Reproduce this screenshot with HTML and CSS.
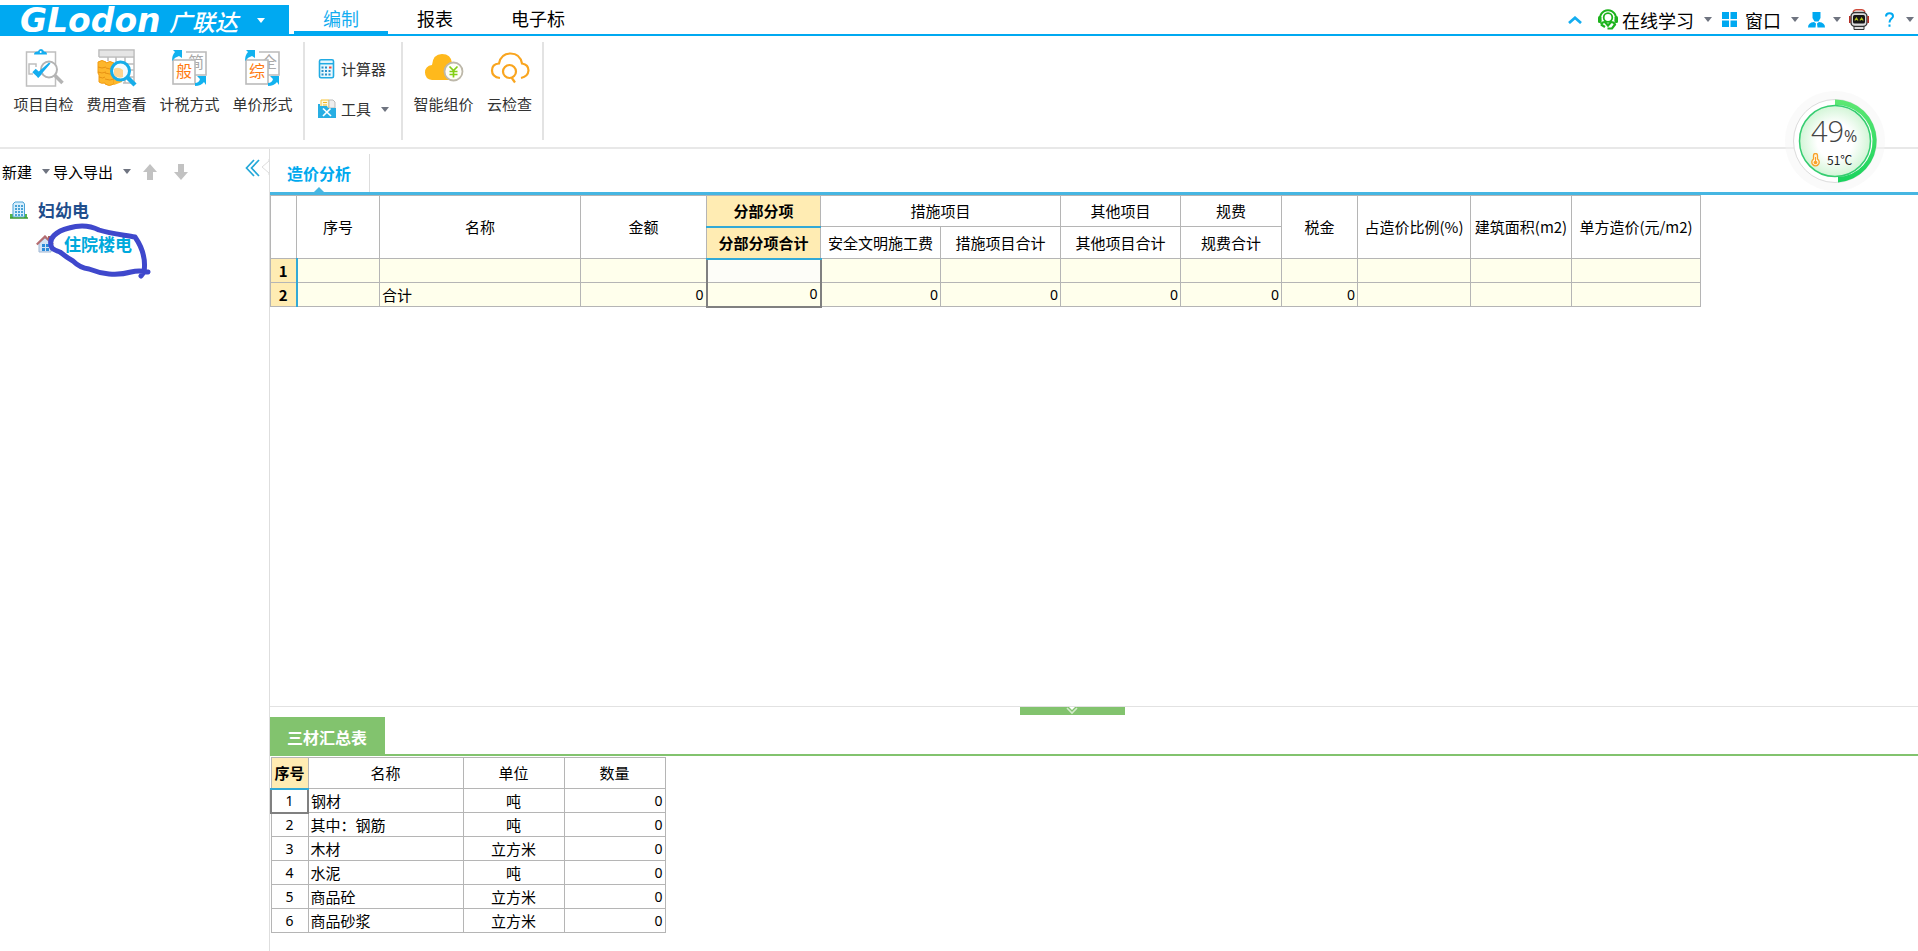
FILE: index.html
```html
<!DOCTYPE html>
<html lang="zh-CN">
<head>
<meta charset="utf-8">
<title>广联达 造价分析</title>
<link rel="stylesheet" href="styles.css">
</head>
<body>
<header class="topbar">
  <button class="brand"><span class="brand-en">GLodon</span><span class="brand-cn">广联达</span><i class="caret caret-white"></i></button>
  <nav class="menu">
    <button class="menu-tab active">编制</button>
    <button class="menu-tab">报表</button>
    <button class="menu-tab">电子标</button>
  </nav>
  <div class="top-tools">
    <button aria-label="收起"><svg width="14" height="8" viewBox="0 0 14 8"><path d="M1 7 7 1.8 13 7" fill="none" stroke="#14adf0" stroke-width="2.8"/></svg></button>
    <button class="study"><svg width="20" height="21" viewBox="0 0 20 21"><path d="M2.500 12A8 8 0 1 1 17.500 12" fill="none" stroke="#1db31d" stroke-width="2"/><rect x="0" y="7" width="3.500" height="7" rx="1.500" fill="#1db31d"/><rect x="16.500" y="7" width="3.500" height="7" rx="1.500" fill="#1db31d"/><circle cx="10" cy="8.500" r="4.300" fill="#fff" stroke="#1db31d" stroke-width="1.800"/><path d="M3 15.500q1-2.500 4-2.500l3 3.500 3-3.500q3 0 4 2.500l-3 4H9.500M3 15.500l4 2.500" fill="none" stroke="#1db31d" stroke-width="2.200"/></svg>在线学习<i class="caret"></i></button>
    <button class="window"><svg width="15" height="15" viewBox="0 0 15 15"><path d="M0 0h7v7H0zM8.500 0h6.500v7H8.500zM0 8.500h7V15H0zM8.500 8.500H15V15H8.500z" fill="#00a9f1"/></svg>窗口<i class="caret"></i></button>
    <button class="user" aria-label="用户"><svg width="17" height="16" viewBox="0 0 17 16"><path d="M4.500 0h8v6l-2 3.500h-4l-2-3.500zM0 15.500q0-5 6-5.500l2 1.500L7.500 15.500h2L9 11.500 11 10q6 .5 6 5.500z" fill="#00a9f1"/></svg><i class="caret"></i></button>
    <button class="robot" aria-label="机器人"><svg width="20" height="21" viewBox="0 0 20 21"><path d="M4 3Q5 .8 7 .8h6Q15 .8 16 3" fill="#fff" stroke="#cf4b3c" stroke-width="1.400"/><rect x="2" y="3.500" width="16" height="14" rx="4" fill="#ddd" stroke="#333" stroke-width="1.400"/><path d="M.8 7v7M19.200 7v7" stroke="#b32e25" stroke-width="1.600"/><rect x="4" y="6" width="12" height="8.500" rx="1.500" fill="#161616"/><path d="M5.800 11.500l1.600-2.500 1.600 2.500M11 11.500l1.600-2.500 1.600 2.500" stroke="#b9c824" fill="none" stroke-width="1.200"/><path d="M5 17.500h10v3H5z" fill="#ddd" stroke="#333"/></svg></button>
    <button class="help" aria-label="帮助"><svg width="9" height="15" viewBox="0 0 9 15"><path d="M1 4.500Q1 1.200 4.500 1.200T8 4.200C8 6.600 4.500 6.800 4.500 10.500M4.500 12.500v2.300" fill="none" stroke="#00a9f1" stroke-width="2"/></svg><i class="caret"></i></button>
  </div>
</header>

<section class="ribbon">
  <div class="group">
    <button class="tool"><svg width="40" height="40" viewBox="0 0 40 40"><rect x="2.500" y="3" width="29" height="34" fill="#fff" stroke="#bfbfbf" stroke-width="1.500"/><path d="M10 5.500Q10 2.500 14 2.500Q14.500 0 17 0T20 2.500Q23 2.500 23 5.500z" fill="#14adf0"/><circle cx="16.700" cy="3" r="1" fill="#fff"/><path d="M9 25H5V15h7v3" fill="none" stroke="#bfbfbf" stroke-width="1.500"/><circle cx="25" cy="20.500" r="8" fill="#fff" stroke="#b4b4b4" stroke-width="2"/><path d="M10 21.500l6 5.500" fill="none" stroke="#14adf0" stroke-width="5"/><path d="M14 29l-2-4L25 13.500l1.500 1z" fill="#14adf0"/><path d="M31 26.500l7.500 7.500" stroke="#b4b4b4" stroke-width="3.500"/></svg>项目自检</button>
    <button class="tool"><svg width="40" height="40" viewBox="0 0 40 40"><path d="M2 8V1h35v33H26M2 8h35M19 8v20M28 8v26M11 8v4M11 15h26M22 21h15M24 28h13" fill="none" stroke="#bbb" stroke-width="1.500"/><rect x="3" y="2" width="33" height="5" fill="#e5e5e5"/><path d="M1 13q4-3 8 0v1q4-3 8 0v21q-5 3-9 0V34q-4 1-6-1v-7l-1-2z" fill="#fdb62b" stroke="#f29c12"/><path d="M1 18q4 2 8 0M1 23q4 2 8 0M2 28q4 2 6 0M9 19q4 2 8 0M8 24q5 2 9 0M8 30q5 2 9 0" fill="none" stroke="#e89214"/><path d="M17 28h8v5l-8 3z" fill="#fdb62b"/><circle cx="23.500" cy="22" r="9" fill="#f3fbff" stroke="#16ade9" stroke-width="3"/><path d="M17 20q4-3 9 1v7q-5 2-9-2z" fill="#fcd490"/><path d="M30 28l8 8" stroke="#16ade9" stroke-width="4.500"/></svg>费用查看</button>
    <button class="tool"><svg width="38" height="40" viewBox="0 0 38 40"><path d="M15 3h20v23H23" fill="#fff" stroke="#bbb" stroke-width="1.600"/><text x="17" y="19" class="glyph glyph-back">简</text><rect x="2" y="11" width="22" height="24" fill="#fff" stroke="#bbb" stroke-width="1.600"/><text x="5" y="28" class="glyph">般</text><path d="M1 12Q1 6 4 3L2 1h9v8L8 7Q4 8 1 12zM24 37q6 0 9-4l2 3V27h-9l3 3q-1 4-5 4z" fill="#12b2ef"/></svg>计税方式</button>
    <button class="tool"><svg width="38" height="40" viewBox="0 0 38 40"><path d="M15 3h20v23H23" fill="#fff" stroke="#bbb" stroke-width="1.600"/><text x="17" y="19" class="glyph glyph-back">全</text><rect x="2" y="11" width="22" height="24" fill="#fff" stroke="#bbb" stroke-width="1.600"/><text x="5" y="28" class="glyph">综</text><path d="M1 12Q1 6 4 3L2 1h9v8L8 7Q4 8 1 12zM24 37q6 0 9-4l2 3V27h-9l3 3q-1 4-5 4z" fill="#12b2ef"/></svg>单价形式</button>
  </div>
  <div class="group stacked">
    <button class="mini"><svg width="18" height="20" viewBox="0 0 18 20"><rect x="1.500" y=".8" width="14" height="18" rx="1.500" fill="#e9f7fd" stroke="#21abe3" stroke-width="1.600"/><path d="M2 4.700h13" stroke="#21abe3" stroke-width="1.500"/><path d="M3.500 8.500h7M3.500 12h10M3.500 15.500h10" stroke="#278fc9" stroke-width="1.800" stroke-dasharray="2 1.500"/><path d="M11 8.500h2.500" stroke="#f04a3c" stroke-width="2"/></svg>计算器</button>
    <button class="mini"><svg width="18" height="20" viewBox="0 0 18 20"><path d="M3 1h8v8H3z" fill="#fff8df" stroke="#f5c33a"/><path d="M5 3.500h4M5 6h4" stroke="#f5b722"/><path d="M11 1h4l2 2v6h-6z" fill="#eee" stroke="#bbb"/><path d="M0 5h2v2h7l1 2h8v10H0z" fill="#27aee3"/><path d="M5 9.500l8 7.500M12.500 9.500L5 17" stroke="#fff" stroke-width="1.700"/></svg>工具<i class="caret"></i></button>
  </div>
  <div class="group cloud">
    <button class="tool"><svg width="40" height="40" viewBox="0 0 40 40"><path d="M8 31Q1 30 1 23.500 1 17 8 16 9 5 18 5T28 14Q33 15 34 20V31z" fill="#ffb91c"/><circle cx="29.500" cy="22.500" r="9" fill="#fffef8" stroke="#bdb8aa" stroke-width="1.800"/><path d="M25.500 17.500l4 4 4-4M29.500 21.500v7M25.500 22.500h8M25.500 25.500h8" fill="none" stroke="#83cf16" stroke-width="1.700"/></svg>智能组价</button>
    <button class="tool narrow"><svg width="40" height="40" viewBox="0 0 40 40"><path d="M10 29Q2 28 2 21.500 2 15 9 14.500 11 4.500 20.500 4.500T32 14.500Q38.500 15.500 38.500 21.500 38 27.500 31 29" fill="none" stroke="#f9a51f" stroke-width="2.200"/><circle cx="19.500" cy="22.500" r="6.500" fill="none" stroke="#f9a51f" stroke-width="2.200"/><path d="M21.500 28.500l3.500 5" stroke="#f9a51f" stroke-width="2.200"/></svg>云检查</button>
  </div>
</section>

<main class="workspace">
  <aside class="sidebar">
    <div class="side-tools">
      <button>新建<i class="caret"></i></button>
      <button>导入导出<i class="caret"></i></button>
      <button class="up" aria-label="上移"><svg width="14" height="16" viewBox="0 0 14 16"><path d="M7 0l7 8h-4v8H4V8H0z" fill="#c2c2c2"/></svg></button>
      <button class="down" aria-label="下移"><svg width="14" height="16" viewBox="0 0 14 16"><path d="M7 16l7-8h-4V0H4v8H0z" fill="#c2c2c2"/></svg></button>
      <button class="fold" aria-label="折叠"><svg width="15" height="18" viewBox="0 0 15 18"><path d="M9 1L1.500 9 9 17M14 1L6.500 9 14 17" fill="none" stroke="#22a7d8" stroke-width="1.700"/></svg></button>
    </div>
    <ul class="tree">
      <li class="node root"><svg width="18" height="18" viewBox="0 0 18 18"><path d="M0 17v-4h3v4zM14 17v-4h3v4z" fill="#57b548"/><path d="M3 16V3l2-2h8l1.500 2v13z" fill="#d9effc" stroke="#4aa3d6"/><path d="M5 5h8M5 8h8M5 11h8M5 14h8" stroke="#4aa3d6" stroke-width="1.800" stroke-dasharray="2 1"/><path d="M0 17h18" stroke="#3d9b35" stroke-width="1.500"/></svg>妇幼电</li>
      <li class="node leaf"><svg width="18" height="18" viewBox="0 0 18 18"><path d="M3 8l6-5 6 5v9H3z" fill="#d3e3f5" stroke="#9eb6d3"/><path d="M12 1h2v4h-2z" fill="#a95c5c"/><path d="M.8 9.500L9 1.500l8 8" fill="none" stroke="#b56d70" stroke-width="2.200"/><path d="M6 9h3v3H6zM10 9h3v3h-3zM6 13h3v3H6zM10 13h3v3h-3z" fill="#2c8ad8"/></svg>住院楼电
        <svg class="scribble" width="106" height="56" viewBox="0 0 106 56"><path d="M101 49Q92 47 84 49 74 52 62 51 52 50 42 46 33 45 26 38 19 34 13 29 7 27 5 25C0 15 10 8 22 5 32 2 42 2 52 7 64 11 78 12 88 14 95 24 99 36 97 49L94 53" fill="none" stroke="#3f48cc" stroke-width="5" stroke-linecap="round" stroke-linejoin="round"/></svg>
      </li>
    </ul>
    <svg class="notch" width="10" height="16" viewBox="0 0 10 16"><path d="M9 0v2L2 8l7 6v2" fill="#fff" stroke="#ddd"/></svg>
  </aside>

  <div class="content">
    <section class="analysis">
      <div class="tabs"><button class="tab">造价分析</button></div>
      <table class="grid cost">
        <colgroup><col class="w26"><col class="w83"><col class="w201"><col class="w126"><col class="w114"><col class="w120"><col class="w120"><col class="w120"><col class="w101"><col class="w76"><col class="w113"><col class="w101"><col class="w129"></colgroup>
        <thead>
          <tr class="h31"><th rowspan="2"></th><th rowspan="2">序号</th><th rowspan="2">名称</th><th rowspan="2">金额</th><th class="hot">分部分项</th><th colspan="2">措施项目</th><th>其他项目</th><th>规费</th><th rowspan="2">税金</th><th rowspan="2">占造价比例(%)</th><th rowspan="2">建筑面积(m2)</th><th rowspan="2">单方造价(元/m2)</th></tr>
          <tr class="h32"><th class="hot">分部分项合计</th><th>安全文明施工费</th><th>措施项目合计</th><th>其他项目合计</th><th>规费合计</th></tr>
        </thead>
        <tbody>
          <tr><th class="rowno">1</th><td></td><td></td><td></td><td class="sel sel-top"></td><td></td><td></td><td></td><td></td><td></td><td></td><td></td><td></td></tr>
          <tr><th class="rowno">2</th><td></td><td>合计</td><td class="num">0</td><td class="num sel sel-end">0</td><td class="num">0</td><td class="num">0</td><td class="num">0</td><td class="num">0</td><td class="num">0</td><td></td><td></td><td></td></tr>
        </tbody>
      </table>
    </section>
    <section class="summary">
      <button class="handle" aria-label="收起面板"><svg width="12" height="8" viewBox="0 0 12 8"><path d="M3 0h6L6 3z" fill="#fff"/><path d="M1 1l5 5 5-5" fill="none" stroke="#d3ebcb" stroke-width="1.600"/></svg></button>
      <div class="green-tabs"><button class="green-tab">三材汇总表</button></div>
      <table class="grid materials">
        <colgroup><col class="w37"><col class="w155"><col class="w101"><col class="w101"></colgroup>
        <thead><tr class="h31"><th class="hot">序号</th><th>名称</th><th>单位</th><th>数量</th></tr></thead>
        <tbody>
          <tr><td class="mid picked">1</td><td>钢材</td><td class="mid">吨</td><td class="num">0</td></tr>
          <tr><td class="mid">2</td><td>其中：钢筋</td><td class="mid">吨</td><td class="num">0</td></tr>
          <tr><td class="mid">3</td><td>木材</td><td class="mid">立方米</td><td class="num">0</td></tr>
          <tr><td class="mid">4</td><td>水泥</td><td class="mid">吨</td><td class="num">0</td></tr>
          <tr><td class="mid">5</td><td>商品砼</td><td class="mid">立方米</td><td class="num">0</td></tr>
          <tr><td class="mid">6</td><td>商品砂浆</td><td class="mid">立方米</td><td class="num">0</td></tr>
        </tbody>
      </table>
    </section>
  </div>
</main>

<div class="gauge">
  <svg class="dial" width="102" height="102" viewBox="0 0 102 102">
    <defs><radialGradient id="glow"><stop offset=".5" stop-color="#fff"/><stop offset="1" stop-color="#d2f5d6"/></radialGradient><linearGradient id="arc" x1="0" y1="0" x2="0" y2="1"><stop offset="0" stop-color="#5ee873"/><stop offset="1" stop-color="#18d35d"/></linearGradient></defs>
    <circle cx="51" cy="51" r="50" fill="#f4f4f4" fill-opacity=".45"/>
    <circle cx="51" cy="51" r="41.500" fill="#fff" stroke="#dcdcdc"/>
    <path d="M51 9.500A41.500 41.500 0 0 1 54 92.400V87A36 36 0 0 0 51 15z" fill="url(#arc)"/>
    <circle cx="51" cy="51" r="35.500" fill="url(#glow)" stroke="#35cd71" stroke-width="1.500"/>
  </svg>
  <div class="reading">
    <div class="percent">49<small>%</small></div>
    <div class="temp"><svg width="9" height="14" viewBox="0 0 9 14"><path d="M2.500 6V2.500a2 2 0 0 1 4 0V6a3.700 3.700 0 1 1-4 0z" fill="#fff2d8" stroke="#f8a128" stroke-width="1.300"/><circle cx="4.500" cy="9.500" r="1.800" fill="#f8a128"/><path d="M4.500 4v5" stroke="#f8a128"/></svg>51℃</div>
  </div>
</div>
</body>
</html>
```

FILE: styles.css
```css
* { box-sizing: border-box; }
body {
  margin: 0;
  min-height: 100vh;
  display: flex;
  flex-direction: column;
  background: #fff;
  color: #000;
  font: 15px/20px "Noto Sans CJK SC", sans-serif;
}
button {
  display: flex;
  align-items: center;
  margin: 0;
  padding: 0;
  border: 0;
  background: none;
  color: inherit;
  font: inherit;
  text-align: left;
  white-space: nowrap;
}
svg { display: block; flex: none; }
.caret {
  border: 4px solid transparent;
  border-top: 5px solid #6f7480;
  border-bottom: 0;
}
.caret-white { border-top-color: #fff; }

/* top bar */
.topbar {
  display: flex;
  height: 36px;
  padding-top: 5px;
  border-bottom: 2px solid #00a9f1;
}
.brand {
  width: 289px;
  height: 31px;
  padding-left: 20px;
  background: #00a9f1;
  color: #fff;
}
.brand-en {
  width: 149px;
  font: italic bold 33px/28px "DejaVu Sans", sans-serif;
}
.brand-cn {
  width: 88px;
  font-size: 23px;
  font-style: italic;
  font-weight: 500;
}
.menu { display: flex; padding-left: 5px; }
.menu-tab {
  padding: 0 29px;
  border-bottom: 3px solid transparent;
  font-size: 18px;
}
.menu-tab.active { color: #14adf0; border-color: #00a9f1; }
.top-tools {
  display: flex;
  align-items: center;
  gap: 16px;
  margin-left: auto;
  padding-right: 4px;
  font-size: 18px;
}
.study { gap: 4px; }
.study .caret { margin-left: 6px; }
.window { gap: 8px; margin-left: -6px; }
.window .caret { margin-left: 2px; }
.user { gap: 8px; margin-left: -7px; }
.robot { margin-left: -8px; }
.help { gap: 12px; }

/* ribbon */
.ribbon {
  display: flex;
  height: 113px;
  padding: 6px 0 7px 7px;
  border-bottom: 2px solid #e8e8e8;
  color: #333;
}
.group { display: flex; border-right: 2px solid #e3e3e3; }
.group:first-child { padding-right: 4px; }
.tool {
  flex-direction: column;
  width: 73px;
  padding-top: 7px;
  gap: 5px;
}
.tool.narrow { width: 59px; }
.glyph { font-size: 16px; fill: #ff7a0f; }
.glyph-back { fill: #aaa; }
.stacked {
  flex-direction: column;
  width: 98px;
  padding: 17px 0 0 13px;
  gap: 20px;
}
.mini { gap: 5px; }
.mini .caret { margin-left: 5px; }
.cloud { width: 141px; padding-left: 4px; }

/* sidebar */
.workspace { display: flex; flex: 1; }
.sidebar {
  position: relative;
  width: 270px;
  flex: none;
  border-right: 1px solid #dedede;
}
.side-tools {
  display: flex;
  align-items: center;
  height: 34px;
  padding: 11px 9px 0 2px;
}
.side-tools button { gap: 10px; margin-right: 3px; }
.side-tools .up { margin-left: 9px; }
.side-tools .down { margin-left: 14px; }
.side-tools .fold { margin: -8px 0 0 auto; }
.tree { margin: 10px 0 0; padding: 0; list-style: none; }
.node {
  position: relative;
  display: flex;
  align-items: center;
  height: 34px;
  font-size: 17px;
  font-weight: bold;
  gap: 10px;
}
.root { padding-left: 10px; color: #1f4e8c; }
.leaf { padding-left: 36px; color: #00a9dc; }
.scribble { position: absolute; left: 47px; top: -4px; overflow: visible; }
.notch { position: absolute; right: -1px; top: 10px; }

/* cost analysis */
.content { display: flex; flex: 1; flex-direction: column; min-width: 0; }
.analysis { flex: 1; }
.tabs {
  display: flex;
  height: 46px;
  padding-top: 5px;
  border-bottom: 3px solid #46b6e2;
}
.tab {
  position: relative;
  padding: 0 18px 0 17px;
  border-right: 1px solid #ddd;
  color: #00a9ee;
  font-size: 16px;
  font-weight: bold;
}
.tab::after {
  content: "";
  position: absolute;
  left: 44px;
  bottom: 0;
  border: 5px solid transparent;
  border-top: 0;
  border-bottom-color: #46b6e2;
}
.grid {
  border-collapse: collapse;
  table-layout: fixed;
  width: min-content;
}
.grid th, .grid td {
  padding: 0 2px;
  border: 1px solid #b5b5b5;
  font-weight: normal;
  white-space: nowrap;
}
.grid th { padding: 0; }
.grid tr { height: 24px; }
.grid .h31 { height: 31px; }
.grid .h32 { height: 32px; }
.grid .hot {
  background: #ffecb3;
  border-bottom: 2px solid #32a9d6;
  font-weight: bold;
}
.grid .num { text-align: right; font-family: "Noto Sans", sans-serif; font-size: 14px; }
.grid .mid { text-align: center; }
.materials .mid:first-child { padding: 0; font-family: "Noto Sans", sans-serif; font-size: 14px; }
.cost td { background: #ffffec; }
.cost .rowno {
  background: #ffecb3;
  border-right: 2px solid #32a9d6;
  font-weight: bold;
}
.cost .sel { border-left: 2px solid #808080; border-right: 2px solid #808080; }
.cost .sel-top { background: #fdfdf8; }
.cost .sel-end { border-bottom: 2px solid #808080; }
.grid .picked { border: 2px solid #808080; border-top-color: #32a9d6; }
.w26 { width: 26px; }
.w37 { width: 37px; }
.w76 { width: 76px; }
.w83 { width: 83px; }
.w101 { width: 101px; }
.w113 { width: 113px; }
.w114 { width: 114px; }
.w120 { width: 120px; }
.w126 { width: 126px; }
.w129 { width: 129px; }
.w155 { width: 155px; }
.w201 { width: 201px; }

/* material summary */
.summary {
  display: flex;
  flex-direction: column;
  padding-bottom: 18px;
  border-top: 1px solid #e2e2e2;
}
.handle {
  align-self: center;
  justify-content: center;
  width: 105px;
  height: 8px;
  margin-right: 44px;
  background: #82c36e;
}
.green-tabs {
  display: flex;
  height: 41px;
  margin-bottom: 1px;
  padding-top: 2px;
  border-bottom: 2px solid #82c36e;
}
.green-tab {
  padding: 2px 18px 0 17px;
  background: #82c36e;
  color: #fff;
  font-size: 16px;
  font-weight: bold;
}

/* floating system gauge */
.gauge {
  position: absolute;
  top: 90px;
  right: 32px;
  width: 102px;
  height: 102px;
}
.reading {
  position: absolute;
  inset: 27px 0 0 27px;
  color: #444;
}
.percent { font: 300 29px/28px "Open Sans", "Noto Sans", sans-serif; }
.percent small { font-size: 16px; font-weight: 400; }
.temp {
  display: flex;
  align-items: center;
  gap: 7px;
  height: 20px;
  color: #222;
  font-size: 12px;
}
```
